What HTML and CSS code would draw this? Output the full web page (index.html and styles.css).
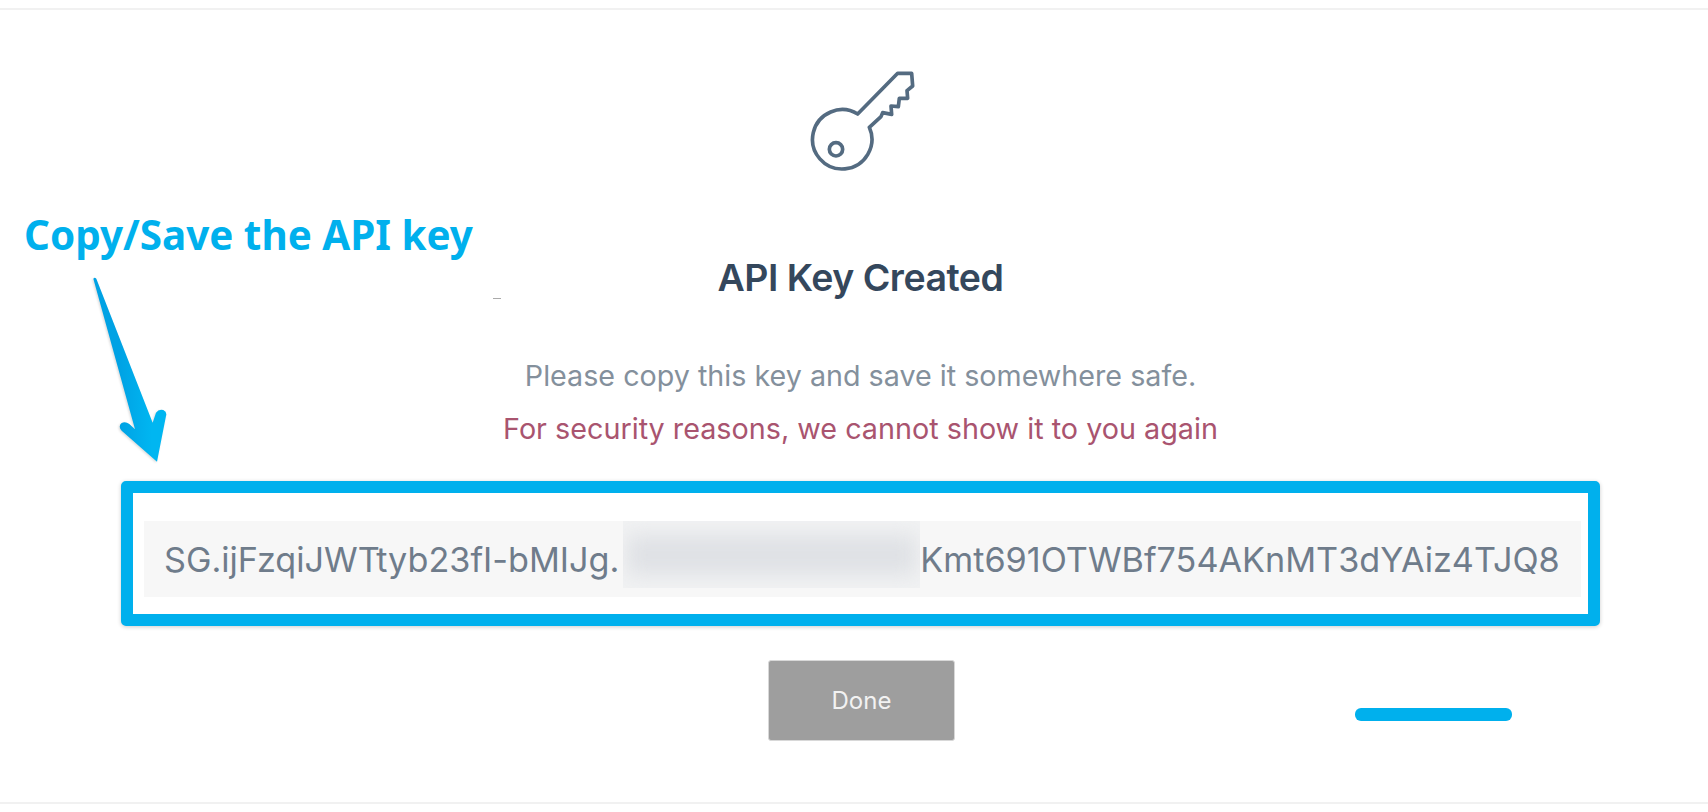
FILE: index.html
```html
<!DOCTYPE html>
<html>
<head>
  <title>API Key Created</title>
  <link rel="stylesheet" href="styles.css">
</head>
<body>
  <div class="panel">
    <svg class="key-icon" width="160" height="140" viewBox="0 0 480 420" fill="none" stroke="#546b81" stroke-width="11" stroke-linejoin="round">
      <path d="M230 192 A89 89 0 1 0 265 232 L300 200 L305 188 L332 193 L330 168 L352 170 L355 145 L380 145 L378 122 L395 108 L392 70 L350 70 Z"/>
      <circle cx="165" cy="298" r="20"/>
    </svg>
    <h1 class="title">API Key Created</h1>
    <p class="note">Please copy this key and save it somewhere safe.</p>
    <p class="warning">For security reasons, we cannot show it to you again</p>
    <div class="key-frame">
      <div class="key-field">
        <span class="key-text">SG.ijFzqiJWTtyb23fI-bMIJg.</span>
        <div class="key-blur"><div class="key-smudge"></div></div>
        <span class="key-text">Kmt691OTWBf754AKnMT3dYAiz4TJQ8</span>
      </div>
    </div>
    <button class="done-btn">Done</button>
  </div>

  <div class="callout">Copy/Save the API key</div>
  <svg class="callout-arrow" width="100" height="200" viewBox="0 0 300 600">
    <defs>
      <linearGradient id="arrowFill" x1="0" y1="0" x2="1" y2="0">
        <stop offset="0.35" stop-color="#00a2e4"/>
        <stop offset="0.8" stop-color="#00b6f1"/>
      </linearGradient>
    </defs>
    <path fill="url(#arrowFill)" d="M40 26 Q44 20 49 26 L218 458 L228 428 Q236 416 250 420 Q262 426 258 438 L231 575 L125 482 Q114 470 124 460 Q135 452 148 462 L165 478 Z"/>
  </svg>
  <div class="speck"></div>
  <div class="mark"></div>
</body>
</html>
```

FILE: styles.css
```css
body {
  margin: 0;
  height: 812px;
  overflow: hidden;
  background-color: #fff;
  font-family: Inter, "Liberation Sans", sans-serif;
}

.panel {
  box-sizing: border-box;
  height: 796px;
  margin-top: 8px;
  padding: 40px 0 0 13px;
  border-top: 2px solid #f1f1f1;
  border-bottom: 2px solid #f1f1f1;
  display: flex;
  flex-direction: column;
  align-items: center;
}

.key-icon {
  display: block;
  filter: blur(0.7px);
}

.title {
  margin: 66px 0 0;
  font-size: 37.5px;
  line-height: 44px;
  font-weight: 600;
  letter-spacing: -0.5px;
  color: #34475c;
}

.note {
  margin: 58px 0 0;
  font-size: 28.7px;
  line-height: 36px;
  color: #84909c;
}

.warning {
  margin: 17px 0 0;
  font-size: 28.75px;
  line-height: 36px;
  color: #a9546f;
}

.key-frame {
  box-sizing: border-box;
  width: 1479px;
  margin-top: 34px;
  padding: 28px 7px 17px 11px;
  border: 12px solid #00b0ed;
  border-radius: 5px;
  background-color: #fff;
  box-shadow: 0 1px 4px rgba(0, 0, 0, 0.2);
}

.key-field {
  display: flex;
  align-items: center;
  height: 76px;
  padding-left: 20px;
  background-color: #f7f7f7;
}

.key-text {
  font-size: 34.2px;
  color: #6f7c8b;
  white-space: nowrap;
}

.key-blur {
  flex: none;
  align-self: flex-start;
  width: 297px;
  height: 67px;
  margin-left: 4px;
  overflow: hidden;
  background-color: #f1f2f3;
}

.key-smudge {
  height: 40px;
  margin: 14px 4px 0;
  background-color: #dfe1e5;
  filter: blur(10px);
}

.done-btn {
  width: 187px;
  height: 81px;
  margin-top: 34px;
  margin-left: 2px;
  background-color: #9e9e9e;
  color: #f2f2f2;
  font-family: Inter, "Liberation Sans", sans-serif;
  font-size: 24px;
  border: 1px solid #d8d8d8;
  border-radius: 3px;
}

/* annotations drawn over the screenshot */
.callout {
  position: absolute;
  left: 24px;
  top: 208px;
  font-family: "Noto Sans", sans-serif;
  font-size: 40.4px;
  line-height: 54px;
  font-weight: 700;
  color: #00b0ed;
  white-space: nowrap;
}

.callout-arrow {
  position: absolute;
  left: 80px;
  top: 270px;
  filter: drop-shadow(-1px 1px 1px rgba(0, 0, 0, 0.15));
}

.speck {
  position: absolute;
  left: 493px;
  top: 298px;
  width: 8px;
  height: 1px;
  background-color: #aaa;
}

.mark {
  position: absolute;
  left: 1355px;
  top: 708px;
  width: 157px;
  height: 13px;
  border-radius: 6px;
  background-color: #00b0ed;
}
```
